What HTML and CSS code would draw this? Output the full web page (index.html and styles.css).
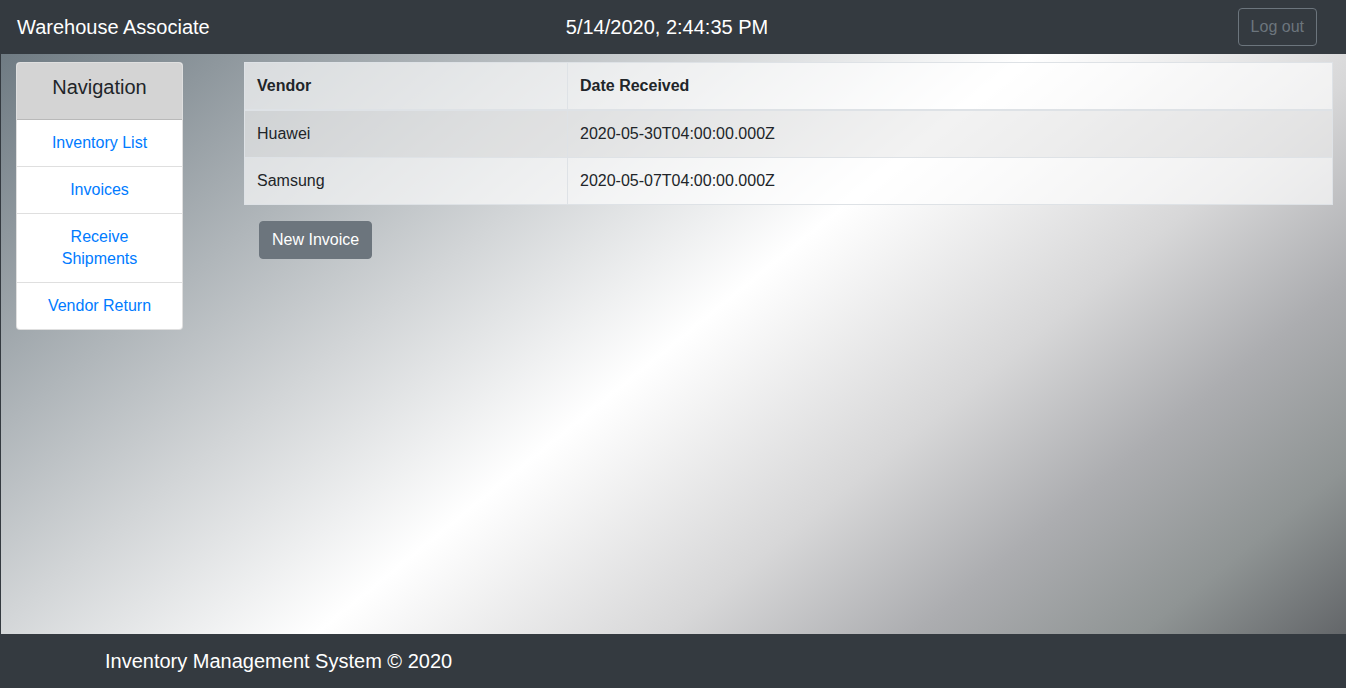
FILE: index.html
```
<!DOCTYPE html>
<html lang="en">
<head>
<meta charset="utf-8">
<title>Warehouse Associate</title>
<link rel="stylesheet" href="styles.css">
</head>
<body>
<header class="topbar">
  <div class="brand">Warehouse Associate</div>
  <div class="clock">5/14/2020, 2:44:35 PM</div>
  <div class="actions"><button class="btn btn-outline" type="button">Log out</button></div>
</header>
<main class="main">
  <nav class="navcard">
    <div class="navcard-header">Navigation</div>
    <ul class="navlist">
      <li><a href="#">Inventory List</a></li>
      <li><a href="#">Invoices</a></li>
      <li><a href="#">Receive Shipments</a></li>
      <li><a href="#">Vendor Return</a></li>
    </ul>
  </nav>
  <section class="content">
    <table class="data">
      <thead>
        <tr><th class="col-vendor">Vendor</th><th>Date Received</th></tr>
      </thead>
      <tbody>
        <tr class="odd"><td>Huawei</td><td>2020-05-30T04:00:00.000Z</td></tr>
        <tr><td>Samsung</td><td>2020-05-07T04:00:00.000Z</td></tr>
      </tbody>
    </table>
    <div class="content-actions"><button class="btn btn-secondary" type="button">New Invoice</button></div>
  </section>
</main>
<footer class="footer">Inventory Management System © 2020</footer>
</body>
</html>
```
FILE: styles.css
```
* { box-sizing: border-box; }
html, body { margin: 0; padding: 0; }
body {
  font-family: "Liberation Sans", Arial, sans-serif;
  color: #212529;
  display: flex;
  flex-direction: column;
  min-height: 100vh;
  background: #343a40;
}
.topbar {
  height: 54px;
  background: #343a40;
  display: grid;
  grid-template-columns: 1fr auto 1fr;
  align-items: center;
  padding: 0 29px 0 17px;
  color: #fff;
}
.brand { font-size: 20px; line-height: 24px; }
.clock { font-size: 20px; line-height: 24px; }
.actions { display: flex; justify-content: flex-end; }
.btn {
  font-family: inherit;
  font-size: 16px;
  line-height: 24px;
  padding: 6px 12px;
  border-radius: 4px;
  border: 1px solid transparent;
  cursor: pointer;
}
.btn-outline {
  background: transparent;
  border-color: #6c757d;
  color: #6c757d;
}
.btn-secondary {
  background: #6c757d;
  border-color: #6c757d;
  color: #fff;
}
.main {
  flex: 1;
  display: flex;
  align-items: flex-start;
  gap: 61px;
  padding: 8px 13px 0 15px;
  border-left: 1px solid #343a40;
  background: linear-gradient(141deg, #6f7b83 0%, #8e979d 11%, #d2d5d7 34%, #ffffff 50%, #d7d7d8 67%, #acadb0 79%, #8f9494 90%, #636669 100%);
}
.navcard {
  width: 167px;
  flex: none;
  background: #fff;
  border: 1px solid rgba(0,0,0,0.125);
  border-radius: 4px;
  overflow: hidden;
}
.navcard-header {
  background: #d4d4d4;
  border-bottom: 1px solid rgba(0,0,0,0.125);
  text-align: center;
  font-size: 20px;
  line-height: 24px;
  padding: 12px 0 20px;
  color: #212529;
}
.navlist { list-style: none; margin: 0; padding: 0; }
.navlist li {
  padding: 12px 20px;
  text-align: center;
  line-height: 22px;
  font-size: 16px;
  border-top: 1px solid rgba(0,0,0,0.125);
}
.navlist li:first-child { border-top: 0; }
.navlist a { color: #007bff; text-decoration: none; }
.content { flex: 1; min-width: 0; }
.data {
  width: 100%;
  border-collapse: collapse;
  background: rgba(255,255,255,0.65);
  font-size: 16px;
  line-height: 22px;
  border: 1px solid #dee2e6;
}
.data th, .data td {
  text-align: left;
  padding: 12px;
  border: 1px solid #dee2e6;
}
.data th { font-weight: bold; border-bottom-width: 2px; }
.data .col-vendor { width: 323px; }
.data tr.odd td { background: rgba(0,0,0,0.05); }
.content-actions { padding: 16px 15px; }
.footer {
  height: 54px;
  background: #343a40;
  color: #fff;
  font-size: 20px;
  line-height: 24px;
  display: flex;
  align-items: center;
  padding-left: 105px;
}
```
